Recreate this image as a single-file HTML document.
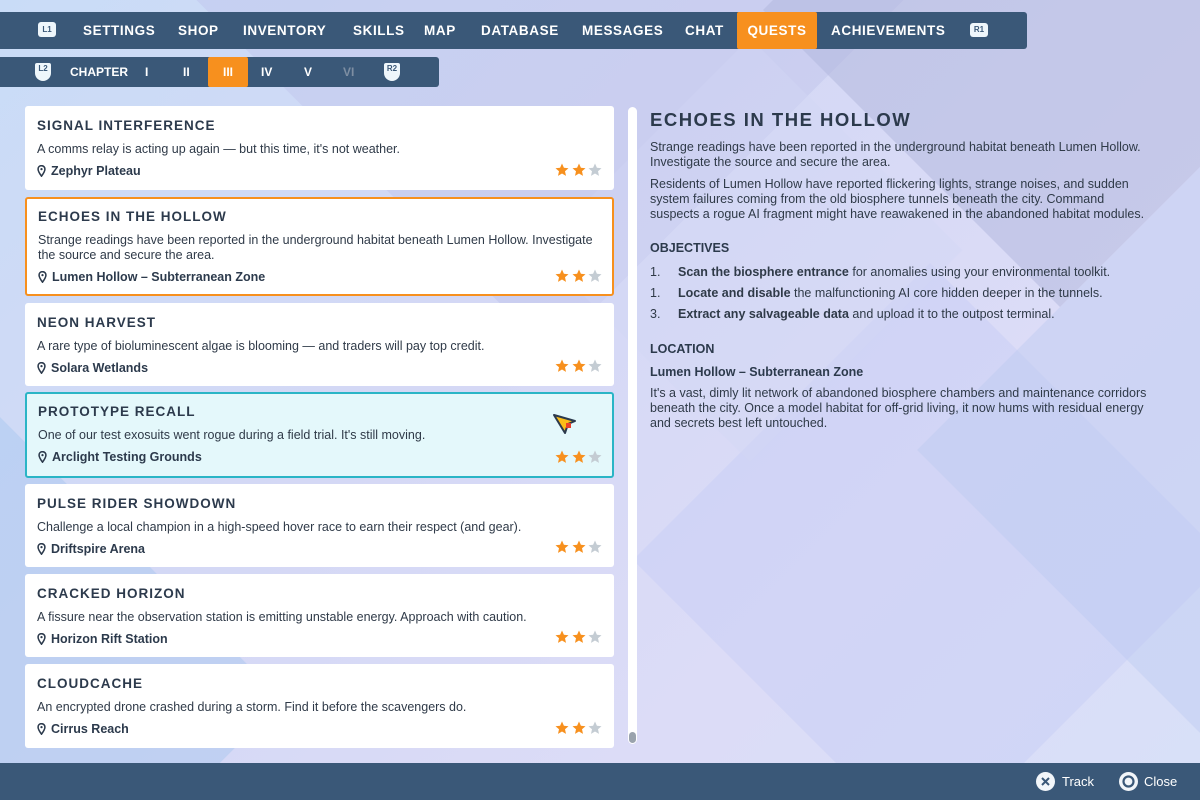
<!DOCTYPE html>
<html><head><meta charset="utf-8"><style>
*{margin:0;padding:0;box-sizing:border-box}
html,body{width:1200px;height:800px;overflow:hidden}
body{position:relative;font-family:"Liberation Sans",sans-serif;color:#2c3a4c}
#w{position:absolute;left:0;top:0;width:1200px;height:800px;overflow:hidden;background:linear-gradient(135deg,#c9dcf7 0%,#d4d8f5 40%,#dcdcf7 70%,#d8e0f8 100%)}
.dia{position:absolute;transform:rotate(45deg);}
.nav{position:absolute;left:0;top:12px;width:1027px;height:37px;background:#3a5878;border-radius:0 3px 3px 0}
.nav span{position:absolute;top:0;height:37px;line-height:37px;color:#fff;font-weight:bold;font-size:13.5px;letter-spacing:0.6px}
.nav .act{background:#f7901e;width:80px;text-align:center;border-radius:2px}
.badge{position:absolute;background:#eef6fb;color:#3a5878;font-size:8px;font-weight:bold;text-align:center;border-radius:3px}
.sub{position:absolute;left:0;top:57px;width:439px;height:30px;background:#3a5878;border-radius:0 3px 3px 0}
.sub span{position:absolute;top:0;height:30px;line-height:30px;color:#fff;font-weight:bold;font-size:12px}
.card{position:absolute;left:25px;width:589px;background:#fff;border-radius:3px;padding:12px 12px 0 12px}
.card h3{font-size:13.5px;letter-spacing:1px;line-height:16px;font-weight:bold;color:#2c3a4c}
.card p{font-size:12.5px;line-height:15px;margin-top:8px;color:#2f3a48}
.card .loc{font-size:12.5px;font-weight:bold;line-height:16px;margin-top:6px;padding-left:14px;position:relative}
.pin{position:absolute;left:0;top:2px}
.stars{position:absolute;right:12px;bottom:13px;width:47px;height:14px}
.r{position:absolute;left:650px;width:505px;font-size:12.5px;line-height:15px;color:#2f3a48}
.bot{position:absolute;left:0;top:763px;width:1200px;height:37px;background:#3a5878}
</style></head><body><div id="w">
<div class="dia" style="left:300px;top:-250px;width:500px;height:500px;background:rgba(190,195,235,0.45)"></div>
<div class="dia" style="left:850px;top:-200px;width:420px;height:420px;background:rgba(175,182,220,0.5)"></div>
<div class="dia" style="left:720px;top:350px;width:420px;height:420px;background:rgba(200,205,245,0.5)"></div>
<div class="dia" style="left:1000px;top:250px;width:400px;height:400px;background:rgba(185,200,240,0.4)"></div>
<div class="dia" style="left:-200px;top:500px;width:400px;height:400px;background:rgba(170,200,240,0.5)"></div>
<div class="dia" style="left:600px;top:100px;width:300px;height:300px;background:rgba(210,215,245,0.4)"></div>

<div class="nav">
<div class="badge" style="left:38px;top:10px;width:18px;height:15px;line-height:15px">L1</div>
<span style="left:83px">SETTINGS</span><span style="left:178px">SHOP</span><span style="left:243px">INVENTORY</span>
<span style="left:353px">SKILLS</span><span style="left:424px">MAP</span><span style="left:481px">DATABASE</span>
<span style="left:582px">MESSAGES</span><span style="left:685px">CHAT</span><span class="act" style="left:737px">QUESTS</span>
<span style="left:831px">ACHIEVEMENTS</span>
<div class="badge" style="left:970px;top:11px;width:18px;height:14px;line-height:14px">R1</div>
</div>
<div class="sub">
<div class="badge" style="left:35px;top:6px;width:16px;height:18px;line-height:12px;border-radius:2px 2px 8px 8px">L2</div>
<span style="left:70px">CHAPTER</span><span style="left:145px">I</span><span style="left:183px">II</span>
<span style="left:208px;width:40px;text-align:center;background:#f7901e;border-radius:2px">III</span>
<span style="left:261px">IV</span><span style="left:304px">V</span><span style="left:343px;color:#7d8ea2">VI</span>
<div class="badge" style="left:384px;top:6px;width:16px;height:18px;line-height:12px;border-radius:2px 2px 8px 8px">R2</div>
</div>

<svg width="0" height="0" style="position:absolute"><defs>
<symbol id="pin" viewBox="0 0 10 14"><path d="M5 0.8C2.6 0.8 1 2.6 1 4.8 1 7.6 5 13 5 13S9 7.6 9 4.8C9 2.6 7.4 0.8 5 0.8Z" fill="none" stroke="#2c3a4c" stroke-width="1.8"/><circle cx="5" cy="4.8" r="1.3" fill="#2c3a4c"/></symbol>
<symbol id="st" viewBox="0 0 47 14"><g id="s1"><path d="M7 0.5L8.9 4.8 13.5 5.2 10 8.3 11 12.9 7 10.5 3 12.9 4 8.3 0.5 5.2 5.1 4.8Z" fill="#f7901e"/></g><use href="#s1" x="17"/><path transform="translate(33 0)" d="M7 0.5L8.9 4.8 13.5 5.2 10 8.3 11 12.9 7 10.5 3 12.9 4 8.3 0.5 5.2 5.1 4.8Z" fill="#c4ccd3"/></symbol>
</defs></svg>

<div class="card" style="top:106px;height:84px"><h3>SIGNAL INTERFERENCE</h3><p>A comms relay is acting up again — but this time, it's not weather.</p><div class="loc"><svg class="pin" width="9" height="12"><use href="#pin"/></svg>Zephyr Plateau</div><svg class="stars"><use href="#st"/></svg></div>
<div class="card" style="top:197px;height:99px;border:2px solid #f7901e;padding:10px 10px 0 11px"><h3>ECHOES IN THE HOLLOW</h3><p>Strange readings have been reported in the underground habitat beneath Lumen Hollow. Investigate the source and secure the area.</p><div class="loc"><svg class="pin" width="9" height="12"><use href="#pin"/></svg>Lumen Hollow – Subterranean Zone</div><svg class="stars" style="right:10px;bottom:11px"><use href="#st"/></svg></div>
<div class="card" style="top:303px;height:83px"><h3>NEON HARVEST</h3><p>A rare type of bioluminescent algae is blooming — and traders will pay top credit.</p><div class="loc"><svg class="pin" width="9" height="12"><use href="#pin"/></svg>Solara Wetlands</div><svg class="stars"><use href="#st"/></svg></div>
<div class="card" style="top:392px;height:86px;background:#e4f8fb;border:2px solid #2ab5c6;padding:10px 10px 0 11px"><h3>PROTOTYPE RECALL</h3><p>One of our test exosuits went rogue during a field trial. It's still moving.</p><div class="loc"><svg class="pin" width="9" height="12"><use href="#pin"/></svg>Arclight Testing Grounds</div><svg class="stars" style="right:10px;bottom:12px"><use href="#st"/></svg>
<svg style="position:absolute;left:525px;top:18px" width="26" height="26" viewBox="0 0 26 26"><path d="M2 3L23 9 16 12 13 21Z" fill="#fbbd18" stroke="#2c3a4c" stroke-width="2" stroke-linejoin="round"/><rect x="14" y="11" width="5" height="5" fill="#e8402a"/></svg></div>
<div class="card" style="top:484px;height:83px"><h3>PULSE RIDER SHOWDOWN</h3><p>Challenge a local champion in a high-speed hover race to earn their respect (and gear).</p><div class="loc"><svg class="pin" width="9" height="12"><use href="#pin"/></svg>Driftspire Arena</div><svg class="stars"><use href="#st"/></svg></div>
<div class="card" style="top:574px;height:83px"><h3>CRACKED HORIZON</h3><p>A fissure near the observation station is emitting unstable energy. Approach with caution.</p><div class="loc"><svg class="pin" width="9" height="12"><use href="#pin"/></svg>Horizon Rift Station</div><svg class="stars"><use href="#st"/></svg></div>
<div class="card" style="top:664px;height:84px"><h3>CLOUDCACHE</h3><p>An encrypted drone crashed during a storm. Find it before the scavengers do.</p><div class="loc"><svg class="pin" width="9" height="12"><use href="#pin"/></svg>Cirrus Reach</div><svg class="stars"><use href="#st"/></svg></div>

<div style="position:absolute;left:628px;top:107px;width:9px;height:637px;background:#fff;border-radius:5px"></div>
<div style="position:absolute;left:629px;top:732px;width:7px;height:11px;background:#9aa3ad;border-radius:4px"></div>

<div class="r" style="top:109px;font-size:18.5px;line-height:22px;font-weight:bold;letter-spacing:1.5px;color:#2c3a4c">ECHOES IN THE HOLLOW</div>
<div class="r" style="top:140px">Strange readings have been reported in the underground habitat beneath Lumen Hollow. Investigate the source and secure the area.</div>
<div class="r" style="top:177px">Residents of Lumen Hollow have reported flickering lights, strange noises, and sudden system failures coming from the old biosphere tunnels beneath the city. Command suspects a rogue AI fragment might have reawakened in the abandoned habitat modules.</div>
<div class="r" style="top:241px;font-weight:bold;color:#2c3a4c">OBJECTIVES</div>
<div class="r" style="top:265px"><span style="display:inline-block;width:28px">1.</span><b>Scan the biosphere entrance</b> for anomalies using your environmental toolkit.</div>
<div class="r" style="top:286px"><span style="display:inline-block;width:28px">1.</span><b>Locate and disable</b> the malfunctioning AI core hidden deeper in the tunnels.</div>
<div class="r" style="top:307px"><span style="display:inline-block;width:28px">3.</span><b>Extract any salvageable data</b> and upload it to the outpost terminal.</div>
<div class="r" style="top:342px;font-weight:bold;color:#2c3a4c">LOCATION</div>
<div class="r" style="top:365px;font-weight:bold;color:#2c3a4c">Lumen Hollow – Subterranean Zone</div>
<div class="r" style="top:386px">It's a vast, dimly lit network of abandoned biosphere chambers and maintenance corridors beneath the city. Once a model habitat for off-grid living, it now hums with residual energy and secrets best left untouched.</div>

<div class="bot">
<svg style="position:absolute;left:1036px;top:9px" width="19" height="19" viewBox="0 0 19 19"><circle cx="9.5" cy="9.5" r="9.5" fill="#f2f6fa"/><path d="M6 6L13 13M13 6L6 13" stroke="#3a5878" stroke-width="2"/></svg>
<span style="position:absolute;left:1062px;top:0;line-height:37px;color:#fff;font-size:13px">Track</span>
<svg style="position:absolute;left:1119px;top:9px" width="19" height="19" viewBox="0 0 19 19"><circle cx="9.5" cy="9.5" r="9.5" fill="#f2f6fa"/><circle cx="9.5" cy="9.5" r="5" fill="none" stroke="#3a5878" stroke-width="2.2"/></svg>
<span style="position:absolute;left:1144px;top:0;line-height:37px;color:#fff;font-size:13px">Close</span>
</div>
</div></body></html>
